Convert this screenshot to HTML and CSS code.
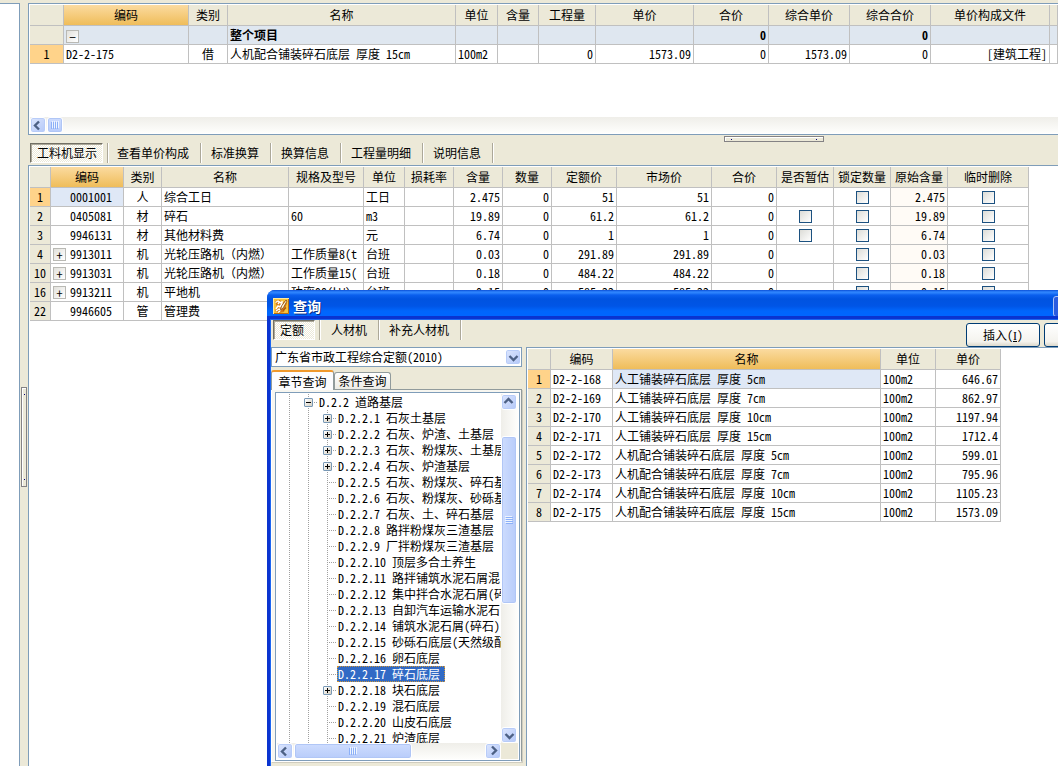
FILE: index.html
```html
<!DOCTYPE html>
<html lang="zh-CN">
<head>
<meta charset="utf-8">
<title>工程计价</title>
<link rel="stylesheet" href="styles.css">
</head>
<body>
<svg class="defs" width="0" height="0" aria-hidden="true">
  <defs>
    <g id="chev" fill="none" stroke="#4d6185" stroke-width="2.4"><path d="M3.5 6 7.5 10 11.500 6"/></g>
    <g id="grip"><path d="M0 .5h7M0 2.500h7M0 4.500h7M0 6.500h7" stroke="#eef4fe"/><path d="M1 1.500h7M1 3.500h7M1 5.500h7M1 7.500h7" stroke="#8cb0f8"/></g>
  </defs>
</svg>
<div class="app">
  <aside class="side"></aside>
  <div class="vsplit"><i class="vhandle"></i></div>
  <main class="main">
    <section class="panel top">
      <table class="grid project">
        <colgroup><col class="w34"><col class="w125"><col class="w39"><col class="w228"><col class="w42"><col class="w41"><col class="w57"><col class="w98"><col class="w75"><col class="w81"><col class="w81"><col class="w119"><col></colgroup>
        <thead><tr><th></th><th class="hot">编码</th><th>类别</th><th>名称</th><th>单位</th><th>含量</th><th>工程量</th><th>单价</th><th>合价</th><th>综合单价</th><th>综合合价</th><th>单价构成文件</th><th></th></tr></thead>
        <tbody>
          <tr class="sum"><th></th><td class="fold"><button class="box" aria-label="折叠">−</button></td><td></td><td>整个项目</td><td></td><td></td><td></td><td></td><td class="r">0</td><td></td><td class="r">0</td><td></td><td></td></tr>
          <tr><th class="cur">1</th><td>D2-2-175</td><td class="c">借</td><td>人机配合铺装碎石底层 厚度 15cm</td><td>100m2</td><td></td><td class="r">0</td><td class="r">1573.09</td><td class="r">0</td><td class="r">1573.09</td><td class="r">0</td><td class="r">[建筑工程]</td><td></td></tr>
        </tbody>
      </table>
      <div class="hbar"><button class="sb" aria-label="向左"><svg class="left" width="15" height="15"><use href="#chev"/></svg></button><span class="thumb small"><svg class="left" width="8" height="8"><use href="#grip"/></svg></span></div>
    </section>
    <div class="hsplit"><i class="hhandle"></i></div>
    <nav class="tabs"><button class="on">工料机显示</button><button>查看单价构成</button><button>标准换算</button><button>换算信息</button><button>工程量明细</button><button>说明信息</button></nav>
    <section class="panel bottom">
      <table class="grid detail">
        <colgroup><col class="w21"><col class="w73"><col class="w38"><col class="w127"><col class="w75"><col class="w41"><col class="w49"><col class="w49"><col class="w49"><col class="w65"><col class="w95"><col class="w65"><col class="w57"><col class="w57"><col class="w57"><col class="w81"></colgroup>
        <thead><tr><th></th><th class="hot">编码</th><th>类别</th><th>名称</th><th>规格及型号</th><th>单位</th><th>损耗率</th><th>含量</th><th>数量</th><th>定额价</th><th>市场价</th><th>合价</th><th>是否暂估</th><th>锁定数量</th><th>原始含量</th><th>临时删除</th></tr></thead>
        <tbody>
          <tr><th class="cur">1</th><td class="code sel">0001001</td><td class="c">人</td><td>综合工日</td><td></td><td>工日</td><td></td><td class="r">2.475</td><td class="r">0</td><td class="r">51</td><td class="r">51</td><td class="r">0</td><td class="c"></td><td class="c"><input type="checkbox" aria-label="锁定数量"></td><td class="r orig">2.475</td><td class="c"><input type="checkbox" aria-label="临时删除"></td></tr>
          <tr><th>2</th><td class="code">0405081</td><td class="c">材</td><td>碎石</td><td>60</td><td>m3</td><td></td><td class="r">19.89</td><td class="r">0</td><td class="r">61.2</td><td class="r">61.2</td><td class="r">0</td><td class="c"><input type="checkbox" aria-label="是否暂估"></td><td class="c"><input type="checkbox" aria-label="锁定数量"></td><td class="r orig">19.89</td><td class="c"><input type="checkbox" aria-label="临时删除"></td></tr>
          <tr><th>3</th><td class="code">9946131</td><td class="c">材</td><td>其他材料费</td><td></td><td>元</td><td></td><td class="r">6.74</td><td class="r">0</td><td class="r">1</td><td class="r">1</td><td class="r">0</td><td class="c"><input type="checkbox" aria-label="是否暂估"></td><td class="c"><input type="checkbox" aria-label="锁定数量"></td><td class="r orig">6.74</td><td class="c"><input type="checkbox" aria-label="临时删除"></td></tr>
          <tr><th>4</th><td class="code"><button class="box" aria-label="展开">+</button>9913011</td><td class="c">机</td><td>光轮压路机（内燃）</td><td>工作质量8(t</td><td>台班</td><td></td><td class="r">0.03</td><td class="r">0</td><td class="r">291.89</td><td class="r">291.89</td><td class="r">0</td><td class="c"></td><td class="c"><input type="checkbox" aria-label="锁定数量"></td><td class="r orig">0.03</td><td class="c"><input type="checkbox" aria-label="临时删除"></td></tr>
          <tr><th>10</th><td class="code"><button class="box" aria-label="展开">+</button>9913031</td><td class="c">机</td><td>光轮压路机（内燃）</td><td>工作质量15(</td><td>台班</td><td></td><td class="r">0.18</td><td class="r">0</td><td class="r">484.22</td><td class="r">484.22</td><td class="r">0</td><td class="c"></td><td class="c"><input type="checkbox" aria-label="锁定数量"></td><td class="r orig">0.18</td><td class="c"><input type="checkbox" aria-label="临时删除"></td></tr>
          <tr><th>16</th><td class="code"><button class="box" aria-label="展开">+</button>9913211</td><td class="c">机</td><td>平地机</td><td>功率90(kW)</td><td>台班</td><td></td><td class="r">0.15</td><td class="r">0</td><td class="r">585.22</td><td class="r">585.22</td><td class="r">0</td><td class="c"></td><td class="c"><input type="checkbox" aria-label="锁定数量"></td><td class="r orig">0.15</td><td class="c"><input type="checkbox" aria-label="临时删除"></td></tr>
          <tr><th>22</th><td class="code">9946605</td><td class="c">管</td><td>管理费</td><td></td><td></td><td></td><td></td><td></td><td></td><td></td><td></td><td></td><td></td><td class="orig"></td><td></td></tr>
        </tbody>
      </table>
    </section>
  </main>
</div>

<div class="dialog" role="dialog" aria-labelledby="dlg-title">
  <header class="titlebar">
    <svg width="16" height="16" viewBox="0 0 16 16"><rect width="16" height="16" fill="#f6c23c"/><path d="M0 16V0h16" fill="none" stroke="#ffe9a0" stroke-width="2"/><path d="M1 15.500h14.500V1" fill="none" stroke="#b86a10"/><path d="M2 3l5-1 2 3 3-2 2 2-3 9-5 1-4-2 2-4z" fill="#d67c14"/><path d="M2.500 4.500 5 3l1.500 1L5 6M7 5l2-1v2L7 8M3 11l2-3 2 1 2-2M3 13l3-2 2 1M5 14.500 7 13" fill="none" stroke="#fff" stroke-width="1.400"/><path d="M13 2 8.500 8l-1 4 3-2.500L14 3z" fill="#fff3cf" stroke="#8c4a0c" stroke-width=".8"/><path d="M10 12.500l3-3" stroke="#a85a10" stroke-width="1.500"/></svg>
    <h1 id="dlg-title">查询</h1>
    <div class="wbtns"><button aria-label="最小化"></button><button aria-label="最大化"></button><button aria-label="关闭"></button></div>
  </header>
  <div class="dbody">
    <div class="toolbar">
      <nav class="tabs"><button class="on">定额</button><button>人材机</button><button>补充人材机</button></nav>
      <div class="actions"><button class="xp">插入(<u>I</u>)</button><button class="xp" aria-label="替换"></button></div>
    </div>
    <div class="cols">
      <div class="lcol">
        <div class="combo">
          <select aria-label="定额库"><option>广东省市政工程综合定额(2010)</option></select>
          <span class="sb drop"><svg width="15" height="15"><use href="#chev"/></svg></span>
        </div>
        <div class="ptabs"><button class="on">章节查询</button><button>条件查询</button></div>
        <div class="page">
          <div class="treebox">
            <ul class="tree">
              <li><i class="g"></i><span class="g t"><button class="pm minus" aria-label="折叠"></button></span><span class="lb">D.2.2 道路基层</span></li>
              <li><i class="g"></i><i class="g"></i><span class="g t"><button class="pm plus" aria-label="展开"></button></span><span class="lb">D.2.2.1 石灰土基层</span></li>
              <li><i class="g"></i><i class="g"></i><span class="g t"><button class="pm plus" aria-label="展开"></button></span><span class="lb">D.2.2.2 石灰、炉渣、土基层</span></li>
              <li><i class="g"></i><i class="g"></i><span class="g t"><button class="pm plus" aria-label="展开"></button></span><span class="lb">D.2.2.3 石灰、粉煤灰、土基层</span></li>
              <li><i class="g"></i><i class="g"></i><span class="g t"><button class="pm plus" aria-label="展开"></button></span><span class="lb">D.2.2.4 石灰、炉渣基层</span></li>
              <li><i class="g"></i><i class="g"></i><i class="g t"></i><span class="lb">D.2.2.5 石灰、粉煤灰、碎石基</span></li>
              <li><i class="g"></i><i class="g"></i><i class="g t"></i><span class="lb">D.2.2.6 石灰、粉煤灰、砂砾基</span></li>
              <li><i class="g"></i><i class="g"></i><i class="g t"></i><span class="lb">D.2.2.7 石灰、土、碎石基层</span></li>
              <li><i class="g"></i><i class="g"></i><i class="g t"></i><span class="lb">D.2.2.8 路拌粉煤灰三渣基层</span></li>
              <li><i class="g"></i><i class="g"></i><i class="g t"></i><span class="lb">D.2.2.9 厂拌粉煤灰三渣基层</span></li>
              <li><i class="g"></i><i class="g"></i><i class="g t"></i><span class="lb">D.2.2.10 顶层多合土养生</span></li>
              <li><i class="g"></i><i class="g"></i><i class="g t"></i><span class="lb">D.2.2.11 路拌铺筑水泥石屑混</span></li>
              <li><i class="g"></i><i class="g"></i><i class="g t"></i><span class="lb">D.2.2.12 集中拌合水泥石屑(碎</span></li>
              <li><i class="g"></i><i class="g"></i><i class="g t"></i><span class="lb">D.2.2.13 自卸汽车运输水泥石</span></li>
              <li><i class="g"></i><i class="g"></i><i class="g t"></i><span class="lb">D.2.2.14 铺筑水泥石屑(碎石)</span></li>
              <li><i class="g"></i><i class="g"></i><i class="g t"></i><span class="lb">D.2.2.15 砂砾石底层(天然级配</span></li>
              <li><i class="g"></i><i class="g"></i><i class="g t"></i><span class="lb">D.2.2.16 卵石底层</span></li>
              <li><i class="g"></i><i class="g"></i><i class="g t"></i><span class="lb sel">D.2.2.17 碎石底层</span></li>
              <li><i class="g"></i><i class="g"></i><span class="g t"><button class="pm plus" aria-label="展开"></button></span><span class="lb">D.2.2.18 块石底层</span></li>
              <li><i class="g"></i><i class="g"></i><i class="g t"></i><span class="lb">D.2.2.19 混石底层</span></li>
              <li><i class="g"></i><i class="g"></i><i class="g t"></i><span class="lb">D.2.2.20 山皮石底层</span></li>
              <li><i class="g"></i><i class="g"></i><i class="g t"></i><span class="lb">D.2.2.21 炉渣底层</span></li>
            </ul>
            <div class="vbar"><button class="sb" aria-label="向上"><svg class="up" width="15" height="15"><use href="#chev"/></svg></button><span class="vthumb"><svg width="8" height="8"><use href="#grip"/></svg></span><button class="sb end" aria-label="向下"><svg width="15" height="15"><use href="#chev"/></svg></button></div>
            <div class="hbar"><button class="sb" aria-label="向左"><svg class="left" width="15" height="15"><use href="#chev"/></svg></button><span class="thumb"><svg class="left" width="8" height="8"><use href="#grip"/></svg></span><button class="sb end" aria-label="向右"><svg class="right" width="15" height="15"><use href="#chev"/></svg></button></div>
          </div>
        </div>
      </div>
      <section class="panel rcol">
        <table class="grid result">
          <colgroup><col class="w23"><col class="w62"><col class="w268"><col class="w55"><col class="w65"></colgroup>
          <thead><tr><th></th><th>编码</th><th class="hot">名称</th><th>单位</th><th>单价</th></tr></thead>
          <tbody>
            <tr><th class="cur">1</th><td>D2-2-168</td><td class="sel">人工铺装碎石底层 厚度 5cm</td><td>100m2</td><td class="r">646.67</td></tr>
            <tr><th>2</th><td>D2-2-169</td><td>人工铺装碎石底层 厚度 7cm</td><td>100m2</td><td class="r">862.97</td></tr>
            <tr><th>3</th><td>D2-2-170</td><td>人工铺装碎石底层 厚度 10cm</td><td>100m2</td><td class="r">1197.94</td></tr>
            <tr><th>4</th><td>D2-2-171</td><td>人工铺装碎石底层 厚度 15cm</td><td>100m2</td><td class="r">1712.4</td></tr>
            <tr><th>5</th><td>D2-2-172</td><td>人机配合铺装碎石底层 厚度 5cm</td><td>100m2</td><td class="r">599.01</td></tr>
            <tr><th>6</th><td>D2-2-173</td><td>人机配合铺装碎石底层 厚度 7cm</td><td>100m2</td><td class="r">795.96</td></tr>
            <tr><th>7</th><td>D2-2-174</td><td>人机配合铺装碎石底层 厚度 10cm</td><td>100m2</td><td class="r">1105.23</td></tr>
            <tr><th>8</th><td>D2-2-175</td><td>人机配合铺装碎石底层 厚度 15cm</td><td>100m2</td><td class="r">1573.09</td></tr>
          </tbody>
        </table>
      </section>
    </div>
  </div>
</div>
</body>
</html>
```

FILE: styles.css
```css
* { box-sizing: border-box; }
html, body { height: 100%; }
body {
  margin: 0;
  overflow: hidden;
  position: relative;
  background: #ece9d8;
  color: #000;
  font: 12px/16px "Noto Sans Mono CJK SC", "Noto Sans CJK SC", monospace;
}
button, select, input { font: inherit; color: inherit; margin: 0; padding: 0; }
i { font-style: normal; }
.defs { position: absolute; }

.app { display: flex; height: 100%; padding-top: 3px; }
.side { width: 20px; flex: none; background: #fff; border: 1px solid #7f9db9; border-left: 0; border-bottom: 0; }
.vsplit { width: 8px; flex: none; display: flex; justify-content: center; padding-top: 384px; }
.vhandle, .hhandle {
  display: flex;
  justify-content: space-between;
  align-items: center;
  background: #ece9d8;
  border: 1px solid #848284;
  box-shadow: inset 1px 1px #fff;
}
.vhandle { width: 6px; height: 100px; flex-direction: column; padding: 6px 0; }
.hhandle { width: 100px; height: 6px; padding: 0 6px; }
.vhandle::before, .vhandle::after, .hhandle::before, .hhandle::after { content: ""; width: 1px; height: 1px; background: #00007a; }
.main { flex: 1; min-width: 0; display: flex; flex-direction: column; }
.hsplit { height: 8px; flex: none; display: flex; align-items: center; padding-left: 696px; }

.panel { background: #fff; border: 1px solid #7f9db9; border-right: 0; padding: 1px 0 0 1px; overflow: hidden; }
.top { height: 132px; flex: none; display: flex; flex-direction: column; padding-bottom: 1px; }
.top .hbar { margin-top: auto; }
.bottom { flex: 1; border-bottom: 0; }

.grid { border-collapse: separate; border-spacing: 0; table-layout: fixed; width: 0; }
.project { width: 100%; }
.grid th, .grid td {
  height: 19px;
  padding: 0 2px;
  border-right: 1px solid #c0c0c0;
  border-bottom: 1px solid #c0c0c0;
  line-height: 18px;
  font-weight: normal;
  text-align: left;
  white-space: nowrap;
  overflow: hidden;
  vertical-align: middle;
}
.grid th { background: #ece9d8; text-align: center; padding: 0; }
.grid thead th { height: 21px; line-height: 20px; }
.grid thead .hot { background: linear-gradient(#fbdba0, #efbd5a); }
.grid th.cur { background: #ffd38a; }
.grid .c { text-align: center; padding: 0; }
.grid .r { text-align: right; }
.grid .sel { background: #dfe8f6; }
.grid .orig { background: #fffbf6; }
.grid .sum td { background: #dfe7f0; font-weight: bold; }
.grid .code { text-align: right; padding-right: 11px; }
.code .box { float: left; margin-top: 3px; }
.fold .box { margin-top: 2px; font-weight: normal; }
.w21 { width: 21px; } .w23 { width: 23px; } .w34 { width: 34px; } .w38 { width: 38px; } .w39 { width: 39px; }
.w41 { width: 41px; } .w42 { width: 42px; } .w49 { width: 49px; } .w55 { width: 55px; } .w57 { width: 57px; }
.w62 { width: 62px; } .w65 { width: 65px; } .w73 { width: 73px; } .w75 { width: 75px; } .w81 { width: 81px; }
.w95 { width: 95px; } .w98 { width: 98px; } .w119 { width: 119px; } .w125 { width: 125px; } .w127 { width: 127px; }
.w228 { width: 228px; } .w268 { width: 268px; }

.box { display: block; width: 13px; height: 13px; border: 1px solid #b9b9b4; background: linear-gradient(135deg, #e2e1dc, #fff); line-height: 11px; text-align: center; }
input[type=checkbox] { appearance: none; display: block; width: 13px; height: 13px; margin: 0 auto; border: 1px solid #1c5180; background: linear-gradient(135deg, #dcdcd7, #fff); }

.tabs { display: flex; flex: none; }
.tabs button { height: 20px; border: 0; background: none; white-space: nowrap; padding: 0 13px 0 9px; line-height: 20px; position: relative; }
.main .tabs { padding: 0 0 2px 2px; }
.tabs button::after { content: ""; position: absolute; right: 0; top: 0; bottom: 0; border-left: 1px solid #aca899; border-right: 1px solid #fff; }
.tabs button.on {
  margin-right: 5px;
  padding: 0 5px 0 6px;
  background: repeating-conic-gradient(#fff 0 25%, #ece9d8 0 50%) 0 0 / 2px 2px;
  border: 1px solid;
  border-color: #716f64 #fff #fff #716f64;
  box-shadow: inset 1px 1px #aca899;
  line-height: 18px;
}
.tabs button.on::after { right: -7px; top: -1px; bottom: -1px; }

.sb { display: block; flex: none; width: 16px; height: 16px; border: 1px solid #fff; border-radius: 3px; background: linear-gradient(135deg, #dce6fe, #b4c8f8); box-shadow: inset 0 0 0 1px #b8ccf8; }
.sb svg { display: block; width: 14px; height: 14px; }
.left { transform: rotate(90deg); }
.right { transform: rotate(-90deg); }
.up { transform: rotate(180deg); }
.hbar { display: flex; height: 16px; background: linear-gradient(#efeee9, #fefefc); }
.thumb, .vthumb { display: flex; align-items: center; justify-content: center; border: 1px solid #fff; border-radius: 3px; box-shadow: inset 0 0 0 1px #b0c6f6; background: linear-gradient(#cddcfe, #b8ccfa); }
.thumb { width: 118px; margin-left: 1px; }
.thumb.small { width: 16px; }
.vbar { display: flex; flex-direction: column; align-items: flex-start; background: linear-gradient(90deg, #efeee9, #fefefc); }
.vthumb { width: 16px; height: 168px; margin-top: 26px; background: linear-gradient(90deg, #cddcfe, #b8ccfa); }
.vbar .end { margin-top: auto; }
.hbar .end { margin-left: auto; }

.dialog {
  position: absolute; left: 267px; top: 290px; right: -64px; bottom: 0;
  display: flex; flex-direction: column;
  background: #0f4fe0;
  border-radius: 8px 8px 0 0;
  overflow: hidden;
}
.titlebar {
  flex: none; height: 30px; display: flex; align-items: center; padding: 2px 2px 0 6px;
  background: linear-gradient(#0a4fd6 0, #2f86ff 2px, #2a80fb 3px, #0a5fee 5px, #0053e0 9px, #0055e6 16px, #0066fc 21px, #0066ff 26px, #0050e8 28px, #003cc6 30px);
}
.titlebar h1 { margin: 0 0 0 4px; font-size: 14px; line-height: 18px; color: #fff; text-shadow: 1px 1px #0a2f85; }
.wbtns { margin-left: auto; display: flex; gap: 2px; }
.wbtns button { width: 21px; height: 21px; border: 1px solid #a9c2f7; border-radius: 3px; background: #2a5ce0; }
.dbody { flex: 1; min-height: 0; margin: 0 4px; background: #ece9d8; display: flex; flex-direction: column; box-shadow: 0 0 0 1px #1c66f0, 0 0 0 4px #0a34d0; }
.toolbar { height: 27px; flex: none; display: flex; justify-content: space-between; }
.toolbar .tabs { padding: 0 0 0 2px; }
.toolbar .tabs button.on { padding-right: 10px; margin-right: 7px; }
.actions { display: flex; gap: 4px; padding-top: 3px; }
.xp { width: 74px; height: 24px; border: 1px solid #003c74; border-radius: 3px; background: linear-gradient(#fff, #f4f3ee 80%, #dcd8cb); }
.xp u { font-family: "Liberation Serif", serif; }
.cols { flex: 1; min-height: 0; display: flex; gap: 4px; }
.lcol { width: 251px; flex: none; display: flex; flex-direction: column; }
.rcol { flex: 1; border-bottom: 0; }
.combo { position: relative; height: 20px; flex: none; }
.combo select { appearance: none; display: block; width: 100%; height: 20px; border: 1px solid #7f9db9; border-radius: 0; background: #fff; padding: 0 20px 0 3px; }
.drop { position: absolute; right: 1px; top: 2px; pointer-events: none; }
.ptabs { display: flex; flex: none; align-items: flex-end; height: 22px; padding-top: 2px; }
.ptabs button { height: 17px; width: 57px; border: 1px solid #919b9c; border-bottom: 0; border-radius: 3px 3px 0 0; background: linear-gradient(#fff, #ecebe5); line-height: 16px; }
.ptabs .on { height: 20px; width: 63px; border-top: 2px solid #f0992c; background: #fcfcfe; line-height: 15px; position: relative; z-index: 1; margin-bottom: -1px; }
.page { flex: 1; min-height: 0; border: 1px solid #919b9c; border-left-color: #fff; border-bottom-color: #fff; margin-bottom: 4px; padding: 2px 1px 0 3px; background: #f7f6f0; box-shadow: 1px 1px #d0cdbf; }
.treebox { height: 100%; border: 1px solid #7f9db9; background: #fff; padding: 1px; display: grid; grid-template-columns: minmax(0, 1fr) 17px; grid-template-rows: minmax(0, 1fr) 16px; }
.treebox::after { content: ""; background: #ece9d8; grid-area: 2 / 2; }
.treebox .hbar { grid-area: 2 / 1; }
.tree { list-style: none; margin: 0; padding: 0 0 0 3px; overflow: hidden; }
.tree li { display: flex; height: 16px; white-space: nowrap; }
.g { flex: none; display: block; width: 19px; height: 16px; background: repeating-linear-gradient(#a0a0a0 0 1px, transparent 1px 2px) 9px 0 / 1px 16px no-repeat; }
.g.t { display: flex; align-items: center; padding-left: 5px; background: repeating-linear-gradient(#a0a0a0 0 1px, transparent 1px 2px) 9px 0 / 1px 16px no-repeat, repeating-linear-gradient(90deg, #a0a0a0 0 1px, transparent 1px 2px) 9px 8px / 10px 1px no-repeat; }
.pm { position: relative; width: 9px; height: 9px; border: 1px solid #7898b5; border-radius: 1px; background: linear-gradient(135deg, #fff, #d5d0c2); }
.pm::before, .plus::after { content: ""; position: absolute; background: #000; left: 1px; top: 3px; width: 5px; height: 1px; }
.plus::after { left: 3px; top: 1px; width: 1px; height: 5px; }
.lb { padding: 0 1px; }
.lb.sel { background: #316ac5; color: #fff; padding-right: 5px; outline: 1px dotted #ce953a; outline-offset: -1px; }
```
